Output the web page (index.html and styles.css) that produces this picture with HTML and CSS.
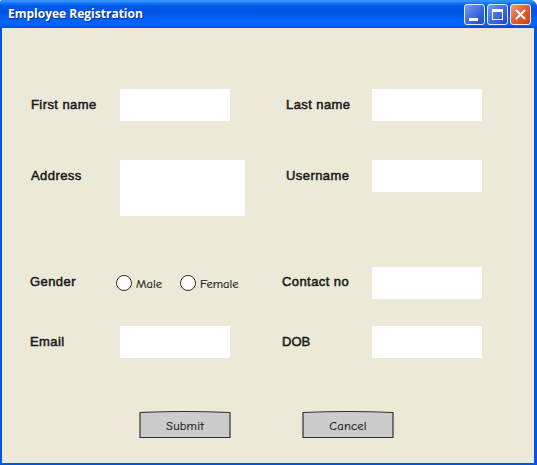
FILE: index.html
```html
<!DOCTYPE html>
<html lang="en">
<head>
<meta charset="utf-8">
<title>Employee Registration</title>
<link rel="stylesheet" href="styles.css">
</head>
<body>
<main class="window">
  <header class="titlebar">
    <h1 class="title">Employee Registration</h1>
    <div class="controls">
      <svg class="control" viewBox="0 0 21 21"><defs><linearGradient id="blue" x1="0" y1="0" x2="1" y2="1"><stop offset="0" stop-color="#7c9ff5"/><stop offset=".5" stop-color="#426ce0"/><stop offset="1" stop-color="#1d48c4"/></linearGradient></defs><rect x=".5" y=".5" width="20" height="20" rx="2.5" fill="url(#blue)" stroke="#e6edfc"/><path d="M5 14h9v3H5z" fill="#fff"/></svg>
      <svg class="control" viewBox="0 0 21 21"><rect x=".5" y=".5" width="20" height="20" rx="2.5" fill="url(#blue)" stroke="#e6edfc"/><path d="M5 5h11v11H5zM6 8v7h9V8z" fill="#fff" fill-rule="evenodd"/></svg>
      <svg class="control" viewBox="0 0 21 21"><defs><linearGradient id="red" x1="0" y1="0" x2="1" y2="1"><stop offset="0" stop-color="#f0a088"/><stop offset=".45" stop-color="#e3603c"/><stop offset="1" stop-color="#cc3d0c"/></linearGradient></defs><rect x=".5" y=".5" width="20" height="20" rx="2.5" fill="url(#red)" stroke="#f8e6e4"/><path d="M6 6l9 9M15 6l-9 9" stroke="#fff" stroke-width="2.1"/></svg>
    </div>
  </header>
  <form class="form">
    <label class="label inset" for="first">First name</label>
    <input class="field" id="first">
    <label class="label indent" for="last">Last name</label>
    <input class="field" id="last">

    <label class="label inset" for="address">Address</label>
    <textarea class="field area" id="address"></textarea>
    <label class="label indent" for="user">Username</label>
    <input class="field" id="user">

    <span class="label raised">Gender</span>
    <div class="radios">
      <label class="choice male"><input class="radio" type="radio" name="gender"><span>Male</span></label>
      <label class="choice female"><input class="radio" type="radio" name="gender"><span>Female</span></label>
    </div>
    <label class="label raised" for="contact">Contact no</label>
    <input class="field" id="contact">

    <label class="label" for="email">Email</label>
    <input class="field" id="email">
    <label class="label dob" for="dob">DOB</label>
    <input class="field" id="dob">

    <div class="actions">
      <button class="button" type="button"><svg class="outline" viewBox="0 0 92 28"><path d="M1 1.5Q46-.5 91 1.5V26.5H1z"/></svg><span class="caption">Submit</span></button>
      <button class="button" type="button"><svg class="outline" viewBox="0 0 92 28"><path d="M1 1.5Q46-.5 91 1.5V26.5H1z"/></svg><span class="caption">Cancel</span></button>
    </div>
  </form>
</main>
</body>
</html>
```
FILE: styles.css
```css
* { box-sizing: border-box; }
body { margin: 0; background: #fff; }
.window {
  display: flex;
  flex-direction: column;
  width: 537px;
  height: 465px;
  overflow: hidden;
  background: #0055e5;
  border-radius: 3px 7px 0 0;
}
.titlebar {
  display: flex;
  flex: none;
  justify-content: space-between;
  height: 28px;
  padding: 4px 6px 0 8px;
  background: linear-gradient(#2a8cff 0, #3a94ff 1px, #1677f8 3px, #0058e6 6px, #0054e3 13px, #0060fa 19px, #0066ff 24px, #005bf0 26px, #0046cc 28px);
}
.title {
  margin: 0;
  font: bold 12px/20px "Open Sans", "Noto Sans", sans-serif;
  letter-spacing: 0;
  color: #fff;
  text-shadow: 1px 1px #0a2f91;
}
.controls { display: flex; gap: 2px; }
.control { display: block; width: 21px; height: 21px; }
.form {
  display: grid;
  flex: 1;
  grid-template-columns: 90px 162px 90px 110px;
  grid-template-rows: 71px 107px 59px 85px 28px;
  align-items: start;
  margin: 0 3px 2px 2px;
  padding: 61px 0 0 28px;
  background: #ece9d8;
}
.label {
  padding-top: 8px;
  font: 13px/16px "Liberation Sans", Arial, sans-serif;
  letter-spacing: 0.42px;
  -webkit-text-stroke: 0.5px #181818;
  color: #181818;
  white-space: nowrap;
}
.inset { padding-left: 1px; }
.indent { padding-left: 4px; }
.raised { padding-top: 7px; }
.dob { letter-spacing: 0; }
.field {
  display: block;
  width: 110px;
  height: 32px;
  margin: 0;
  padding: 4px;
  border: 0;
  background: #fff;
  resize: none;
}
.area { width: 125px; height: 56px; }
.radios { display: flex; margin: 8px 0 0 -4px; }
.choice {
  display: flex;
  gap: 4px;
  font: 12.5px/18px "Comic Sans MS", "Comic Neue", "Open Sans", sans-serif;
  -webkit-text-stroke: 0.2px #222;
  color: #222;
}
.male { width: 64px; }
.radio {
  appearance: none;
  flex: none;
  width: 16px;
  height: 16px;
  margin: 0;
  border: 1px solid #303030;
  border-radius: 50%;
  background: #fff;
}
.actions { display: flex; grid-column: 1 / -1; gap: 71px; padding-left: 109px; }
.button {
  display: grid;
  width: 92px;
  height: 28px;
  padding: 0;
  border: 0;
  background: none;
  font: 12.5px/17px "Comic Sans MS", "Comic Neue", "Open Sans", sans-serif;
  letter-spacing: 0.2px;
  -webkit-text-stroke: 0.2px #1c1c1c;
  color: #1c1c1c;
}
.outline, .caption { grid-area: 1 / 1; }
.outline { width: 92px; height: 28px; overflow: visible; fill: #ccc; stroke: #303030; stroke-width: 1.2; stroke-linejoin: round; }
.caption { place-self: start center; padding-top: 7px; }
```
